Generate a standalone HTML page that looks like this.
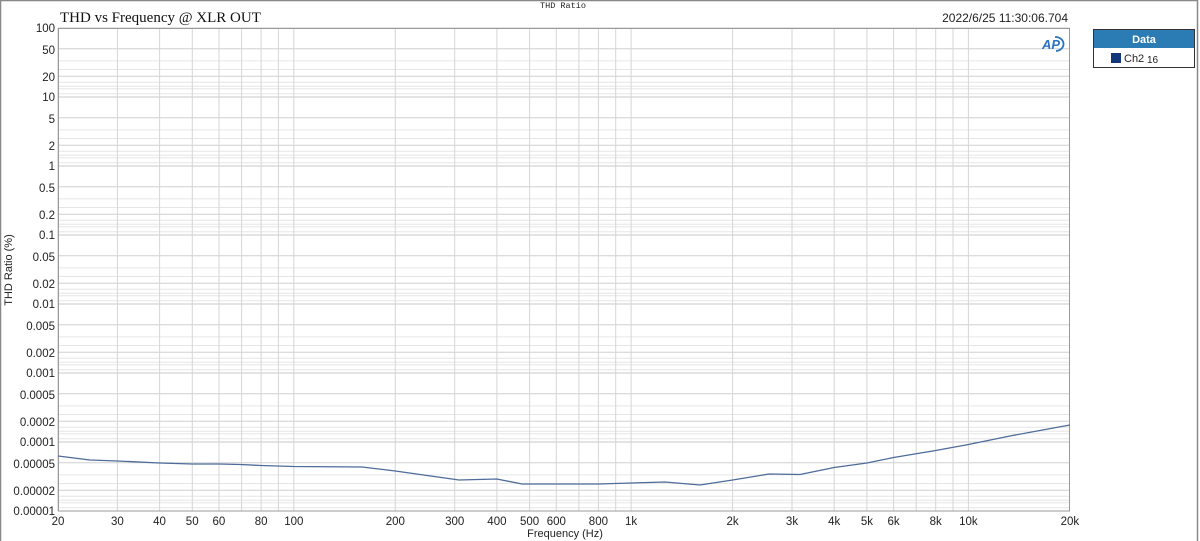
<!DOCTYPE html>
<html><head><meta charset="utf-8"><style>
html,body{margin:0;padding:0;background:#fff}
svg{display:block}
</style></head><body>
<svg width="1200" height="541" xmlns="http://www.w3.org/2000/svg" font-family="'Liberation Sans', sans-serif">
<rect x="0.5" y="0.5" width="1197" height="545" fill="#fff" stroke="#888" stroke-width="1.5"/>
<defs>
<g id="vdec">
<line x1="101.5" y1="28" x2="101.5" y2="511"/><line x1="160.9" y1="28" x2="160.9" y2="511"/><line x1="203.1" y1="28" x2="203.1" y2="511"/><line x1="235.8" y1="28" x2="235.8" y2="511"/><line x1="262.5" y1="28" x2="262.5" y2="511"/><line x1="285.1" y1="28" x2="285.1" y2="511"/><line x1="304.6" y1="28" x2="304.6" y2="511"/><line x1="321.9" y1="28" x2="321.9" y2="511"/><line x1="337.3" y1="28" x2="337.3" y2="511"/>
</g>
<g id="hdec">
<line x1="58" x2="1070" y1="-8.2" y2="-8.2" stroke="#e6e6e6"/><line x1="58" x2="1070" y1="-3.2" y2="-3.2" stroke="#e6e6e6"/><line x1="58" x2="1070" y1="-10.7" y2="-10.7" stroke="#e6e6e6"/><line x1="58" x2="1070" y1="-14.8" y2="-14.8" stroke="#e6e6e6"/><line x1="58" x2="1070" y1="-27.5" y2="-27.5" stroke="#e6e6e6"/><line x1="58" x2="1070" y1="-36.1" y2="-36.1" stroke="#e6e6e6"/>
<line x1="58" x2="1070" y1="-20.8" y2="-20.8" stroke="#d0d0d0"/><line x1="58" x2="1070" y1="-48.2" y2="-48.2" stroke="#d0d0d0"/><line x1="58" x2="1070" y1="-69" y2="-69" stroke="#c8c8c8"/>
</g>
</defs>
<g>
<use href="#hdec" transform="translate(0,511)"/><use href="#hdec" transform="translate(0,442)"/><use href="#hdec" transform="translate(0,373)"/><use href="#hdec" transform="translate(0,304)"/><use href="#hdec" transform="translate(0,235)"/><use href="#hdec" transform="translate(0,166)"/><use href="#hdec" transform="translate(0,97)"/>
</g>
<g stroke="#d6d6d6">
<use href="#vdec" transform="translate(-43.5,0)"/><use href="#vdec" transform="translate(293.8,0)"/><use href="#vdec" transform="translate(631.1,0)"/>
</g>
<g stroke="#c8c8c8">
<line x1="58" y1="28" x2="58" y2="511"/>
</g>
<rect x="58.5" y="28.5" width="1011" height="482.5" fill="none" stroke="#9a9a9a"/>
<polyline fill="none" stroke="#4f6b99" stroke-width="1.3" points="58,456 90,460 117.4,461 159.5,463 192.2,464 218.9,464 240,464.5 261.1,465.5 293.8,466.5 362,467 395.3,471 459,480 496.9,479 522,484 598.4,484 665,482 700,485 732.6,480 769,474 800,474.5 834.2,467.5 866.9,463 893.6,457.5 935.7,450.5 968.4,444.5 1010,436 1069.9,425"/>
<g font-size="11.5" fill="#222" text-anchor="end">
<text x="55" y="32">100</text><text x="55" y="54">50</text><text x="55" y="81">20</text><text x="55" y="101">10</text><text x="55" y="123">5</text><text x="55" y="150">2</text><text x="55" y="170">1</text><text x="55" y="192">0.5</text><text x="55" y="219">0.2</text><text x="55" y="239">0.1</text><text x="55" y="261">0.05</text><text x="55" y="288">0.02</text><text x="55" y="308">0.01</text><text x="55" y="330">0.005</text><text x="55" y="357">0.002</text><text x="55" y="377">0.001</text><text x="55" y="399">0.0005</text><text x="55" y="426">0.0002</text><text x="55" y="446">0.0001</text><text x="55" y="468">0.00005</text><text x="55" y="495">0.00002</text><text x="55" y="515">0.00001</text>
</g>
<g font-size="11.5" fill="#222" text-anchor="middle">
<text x="58" y="525">20</text><text x="117.4" y="525">30</text><text x="159.5" y="525">40</text><text x="192.2" y="525">50</text><text x="218.9" y="525">60</text><text x="261.1" y="525">80</text><text x="293.8" y="525">100</text><text x="395.3" y="525">200</text><text x="454.7" y="525">300</text><text x="496.9" y="525">400</text><text x="529.6" y="525">500</text><text x="556.3" y="525">600</text><text x="598.4" y="525">800</text><text x="631.1" y="525">1k</text><text x="732.6" y="525">2k</text><text x="792" y="525">3k</text><text x="834.2" y="525">4k</text><text x="866.9" y="525">5k</text><text x="893.6" y="525">6k</text><text x="935.7" y="525">8k</text><text x="968.4" y="525">10k</text><text x="1069.9" y="525">20k</text>
<text x="565" y="537" font-size="11">Frequency (Hz)</text>
</g>
<text transform="translate(12,270) rotate(-90)" text-anchor="middle" font-size="11" fill="#222">THD Ratio (%)</text>
<text x="563" y="8" text-anchor="middle" font-family="'Liberation Mono', monospace" font-size="8.5" fill="#222">THD Ratio</text>
<text x="60" y="22" font-family="'Liberation Serif', serif" font-size="15" fill="#111">THD vs Frequency @ XLR OUT</text>
<text x="1068" y="22" text-anchor="end" font-size="12" fill="#222">2022/6/25 11:30:06.704</text>
<text x="1042" y="49" font-size="13" font-weight="bold" font-style="italic" fill="#2a73c0">AP</text>
<path d="M1055,37 A8,7 0 0 1 1056,51" fill="none" stroke="#2a73c0" stroke-width="1.8"/>
<rect x="1093.5" y="29.5" width="101" height="38" fill="#fff" stroke="#333"/>
<rect x="1094" y="30" width="100" height="18" fill="#2b7bb5"/>
<text x="1144" y="43" text-anchor="middle" font-size="11" font-weight="bold" fill="#fff">Data</text>
<rect x="1111" y="53" width="10" height="10" fill="#13357a"/>
<text x="1124" y="62" font-size="11" fill="#222">Ch2</text><text x="1147" y="63" font-size="10" fill="#222">16</text>
</svg>
</body></html>
